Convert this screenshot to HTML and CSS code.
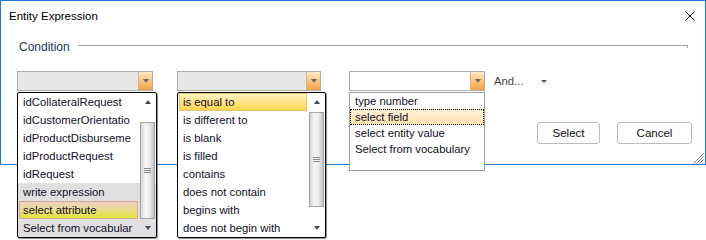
FILE: index.html
```html
<!DOCTYPE html>
<html lang="en">
<head>
  <meta charset="UTF-8" />
  <title>Entity Expression</title>
  <link rel="stylesheet" href="styles.css">
</head>
<body>
  <div class="window">
    <div class="titlebar">
      <span class="title">Entity Expression</span>
      <svg class="close" width="10" height="10" viewBox="0 0 10 10">
        <path d="M0.5 0.5 L9.5 9.5 M9.5 0.5 L0.5 9.5" stroke="#000" stroke-width="1" fill="none"/>
      </svg>
    </div>

    <div class="group">
      <span class="group-label">Condition</span>
      <span class="group-line"></span>
    </div>

    <div class="editors">
      <!-- attribute picker -->
      <div class="combo combo-attr">
        <div class="combo-edit"></div>
        <div class="combo-btn"><span class="tri-down"></span></div>
        <div class="popup popup-attr">
          <div class="items">
            <div class="item">idCollateralRequest</div>
            <div class="item">idCustomerOrientatio</div>
            <div class="item">idProductDisburseme</div>
            <div class="item">idProductRequest</div>
            <div class="item">idRequest</div>
            <div class="item">write expression</div>
            <div class="item item-hot">select attribute</div>
            <div class="item">Select from vocabular</div>
          </div>
          <div class="scrollbar">
            <div class="sb-btn"><span class="tri-up"></span></div>
            <div class="sb-track">
              <div class="thumb thumb-attr"><span class="grip"></span></div>
            </div>
            <div class="sb-btn"><span class="tri-down dark"></span></div>
          </div>
        </div>
      </div>

      <!-- operator picker -->
      <div class="combo combo-op">
        <div class="combo-edit"></div>
        <div class="combo-btn"><span class="tri-down"></span></div>
        <div class="popup popup-op">
          <div class="items">
            <div class="item item-selected">is equal to</div>
            <div class="item">is different to</div>
            <div class="item">is blank</div>
            <div class="item">is filled</div>
            <div class="item">contains</div>
            <div class="item">does not contain</div>
            <div class="item">begins with</div>
            <div class="item">does not begin with</div>
          </div>
          <div class="scrollbar">
            <div class="sb-btn"><span class="tri-up"></span></div>
            <div class="sb-track">
              <div class="thumb thumb-op"><span class="grip"></span></div>
            </div>
            <div class="sb-btn"><span class="tri-down dark"></span></div>
          </div>
        </div>
      </div>

      <!-- value picker -->
      <div class="combo combo-value">
        <div class="combo-edit"></div>
        <div class="combo-btn"><span class="tri-down"></span></div>
        <div class="popup popup-value">
          <div class="vitem">type number</div>
          <div class="vitem vitem-focus">select field</div>
          <div class="vitem">select entity value</div>
          <div class="vitem">Select from vocabulary</div>
        </div>
      </div>

      <div class="and-menu">
        <span class="and-text">And...</span>
        <span class="tri-down small"></span>
      </div>
    </div>

    <div class="buttons">
      <button class="btn btn-select">Select</button>
      <button class="btn btn-cancel">Cancel</button>
    </div>

    <svg class="size-grip" width="12" height="12" viewBox="0 0 12 12">
      <path d="M11.5 1.5 L1.5 11.5 M11.5 4.5 L4.5 11.5 M11.5 7.5 L7.5 11.5 M11.5 10.5 L10.5 11.5" stroke="#7a7a7a" stroke-width="1" fill="none"/>
    </svg>
  </div>
</body>
</html>
```

FILE: styles.css
```css
* { box-sizing: border-box; margin: 0; padding: 0; }

html, body { height: 240px; }

body {
  background: #fff;
  font-family: 'Liberation Sans', Arial, sans-serif;
  font-size: 11.3px;
  color: #111;
}

.window {
  position: relative;
  width: 706px;
  height: 165px;
  border: 1px solid #1a7bd0;
  background: #fff;
}

/* title bar */
.titlebar {
  height: 29px;
  display: flex;
  align-items: center;
  justify-content: space-between;
  padding: 0 10px 0 8px;
}
.title { font-size: 11.5px; color: #000; }
.close { display: block; margin-top: 1px; }

/* group header */
.group {
  display: flex;
  align-items: flex-start;
  margin-top: 8px;
  padding: 0 17px 0 18px;
  height: 18px;
}
.group-label {
  line-height: 18px;
  font-size: 12px;
  color: #1e3859;
}
.group-line {
  position: relative;
  flex: 1;
  height: 1px;
  margin: 7px 0 0 8px;
  background: #a5a5a5;
}
.group-line::after {
  content: '';
  position: absolute;
  right: 0; top: 0;
  width: 1px; height: 3px;
  background: #a5a5a5;
}

/* combo row */
.editors {
  display: flex;
  align-items: center;
  margin-top: 15px;
  padding-left: 16px;
  height: 20px;
}
.combo {
  position: relative;
  display: flex;
  height: 20px;
  border: 1px solid #adadad;
  background: #e8e8e8;
}
.combo-attr { width: 136px; }
.combo-op { width: 144px; margin-left: 24px; }
.combo-value { width: 136px; margin-left: 28px; background: #fff; border-color: #abadb3; }
.combo-edit { flex: 1; }
.combo-btn {
  width: 14px;
  display: flex;
  align-items: center;
  justify-content: center;
  border-left: 1px solid #e2b27a;
  background: linear-gradient(#fde8c8, #fbc888 45%, #f6a445);
}

.tri-down, .tri-up {
  display: block;
  width: 0; height: 0;
  border-left: 3.5px solid transparent;
  border-right: 3.5px solid transparent;
}
.tri-down { border-top: 4px solid #6a6a6a; }
.tri-down.dark { border-top-color: #3e4a5c; }
.tri-down.small { border-top-color: #555; border-left-width: 3px; border-right-width: 3px; border-top-width: 3px; }
.tri-up { border-bottom: 4px solid #3e4a5c; }

/* dropdown popups */
.popup {
  position: absolute;
  top: 20px;
  left: -1px;
  display: flex;
  background: #fff;
  border: 1px solid #000;
  border-radius: 2px;
  box-shadow: 1px 1px 1px rgba(0, 0, 0, 0.45);
  z-index: 5;
}
.popup-attr {
  width: 140px;
  height: 146px;
  background: linear-gradient(#fff 90px, #e0e0e0 90px);
}
.popup-op { width: 149px; height: 146px; }
.popup-value {
  width: 136px;
  height: 79px;
  flex-direction: column;
  border-color: #a0a0a0;
  border-radius: 0;
  box-shadow: none;
}

.items { flex: 1; display: flex; flex-direction: column; }
.item {
  height: 18px;
  line-height: 16px;
  margin: 0 1px;
  padding-left: 3px;
  border: 1px solid transparent;
  white-space: nowrap;
  overflow: hidden;
  color: #10102a;
}
.item-selected {
  border-color: #e2c46c;
  background: linear-gradient(#fff4c6, #ffe488 50%, #ffd64c);
}
.item-hot {
  border-color: #d8a49c;
  background: linear-gradient(#efd2c4, #ebdc92 45%, #e4e43a);
}

.scrollbar {
  width: 17px;
  display: flex;
  flex-direction: column;
}
.sb-btn {
  height: 18px;
  display: flex;
  align-items: center;
  justify-content: center;
}
.sb-track { flex: 1; }
.thumb {
  margin: 0 1px;
  display: flex;
  align-items: center;
  justify-content: center;
  border: 1px solid #a3a3a3;
  background: linear-gradient(90deg, #d6d6d6, #f6f6f6 35%, #ececec 65%, #c4c4c4);
}
.thumb-attr { margin-top: 11px; height: 97px; }
.thumb-op { margin-top: 1px; height: 95px; }
.grip {
  width: 7px;
  height: 5px;
  border-top: 1px solid #8c8c8c;
  border-bottom: 1px solid #8c8c8c;
  background: linear-gradient(transparent 1px, #8c8c8c 1px, #8c8c8c 2px, transparent 2px);
}

.vitem {
  height: 16px;
  line-height: 14px;
  padding-left: 4px;
  border: 1px dotted transparent;
  white-space: nowrap;
  color: #10102a;
}
.vitem-focus {
  border-color: #000;
  background: linear-gradient(#fff1d8, #ffe2b0);
}

.and-menu {
  display: flex;
  align-items: center;
  margin-left: 9px;
  color: #444;
}
.and-menu .tri-down { margin-left: 17px; margin-top: 1px; }

/* dialog buttons */
.buttons {
  display: flex;
  justify-content: flex-end;
  gap: 17px;
  margin-top: 31px;
  padding-right: 13px;
}
.btn {
  height: 22px;
  border: 1px solid #bdbdbd;
  border-radius: 3px;
  background: #fdfdfd;
  font-family: inherit;
  font-size: 11.5px;
  color: #111;
}
.btn-select { width: 63px; }
.btn-cancel { width: 75px; }

.size-grip {
  position: absolute;
  right: 1px;
  bottom: 0;
}
```
